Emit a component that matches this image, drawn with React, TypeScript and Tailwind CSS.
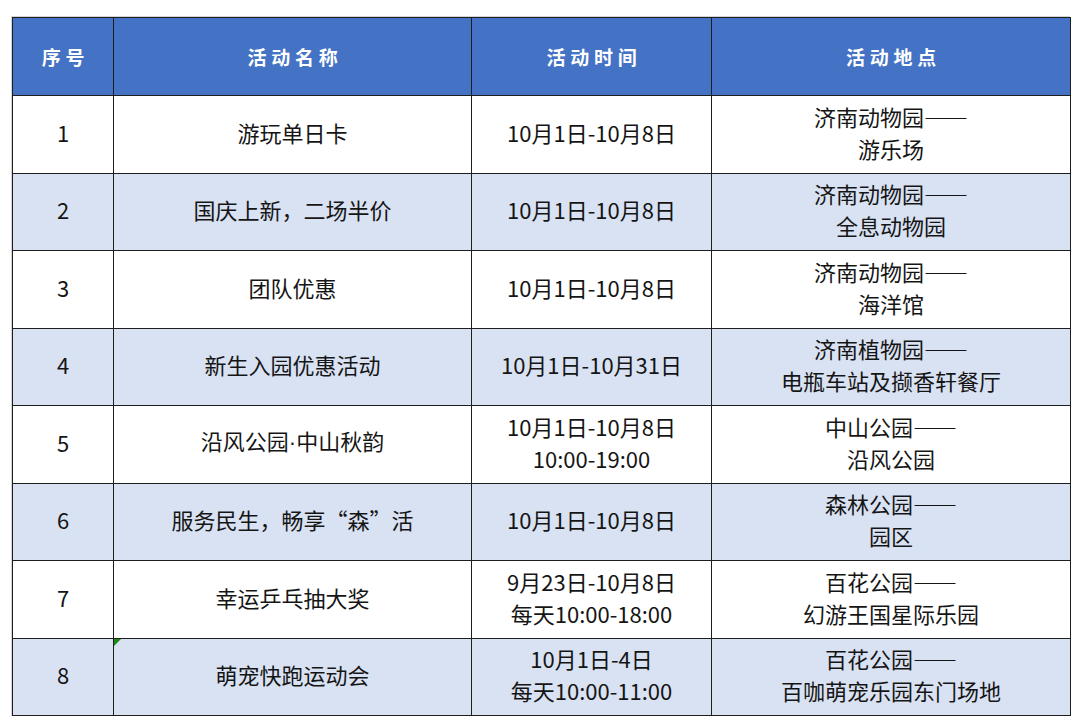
import React from "react";

type Row = { no: string; name: string; time: string[]; place: string[] };

const rows: Row[] = [
  { no: "1", name: "游玩单日卡", time: ["10月1日-10月8日"], place: ["济南动物园", "游乐场"] },
  { no: "2", name: "国庆上新，二场半价", time: ["10月1日-10月8日"], place: ["济南动物园", "全息动物园"] },
  { no: "3", name: "团队优惠", time: ["10月1日-10月8日"], place: ["济南动物园", "海洋馆"] },
  { no: "4", name: "新生入园优惠活动", time: ["10月1日-10月31日"], place: ["济南植物园", "电瓶车站及撷香轩餐厅"] },
  { no: "5", name: "沿风公园·中山秋韵", time: ["10月1日-10月8日", "10:00-19:00"], place: ["中山公园", "沿风公园"] },
  { no: "6", name: "服务民生，畅享“森”活", time: ["10月1日-10月8日"], place: ["森林公园", "园区"] },
  { no: "7", name: "幸运乒乓抽大奖", time: ["9月23日-10月8日", "每天10:00-18:00"], place: ["百花公园", "幻游王国星际乐园"] },
  { no: "8", name: "萌宠快跑运动会", time: ["10月1日-4日", "每天10:00-11:00"], place: ["百花公园", "百咖萌宠乐园东门场地"] },
];

const cell = "border-[1.5px] border-[#1e1e1e] text-center align-middle";
const body = `${cell} pb-[5px]`;

// the middle dot is narrow (Latin width) in the source
function Name({ text }: { text: string }) {
  const parts = text.split("·");
  return (
    <>
      {parts.map((p, i) => (
        <React.Fragment key={i}>
          {i > 0 && <span className="font-['Liberation_Sans']">·</span>}
          {p}
        </React.Fragment>
      ))}
    </>
  );
}

export default function App() {
  return (
    <div
      className="h-[725px] w-[1080px] bg-white pl-[11px] pt-[16px]"
      style={{ fontFamily: '"Noto Sans CJK SC", "Noto Sans", sans-serif' }}
    >
      <div className="w-[1059px] border-l border-t border-[#d6d6d6]">
        <table className="w-[1058px] table-fixed border-collapse text-[22px] leading-[32px] text-[#151515]">
          <colgroup>
            <col className="w-[101px]" />
            <col className="w-[358px]" />
            <col className="w-[240px]" />
            <col className="w-[359px]" />
          </colgroup>
          <thead>
            <tr className="h-[78px] bg-[#4472c4] text-[19px] font-semibold tracking-[0.25em] text-white">
              <th className={`${cell} pl-[5px]`}>序号</th>
              <th className={`${cell} pl-[5px]`}>活动名称</th>
              <th className={`${cell} pl-[5px]`}>活动时间</th>
              <th className={`${cell} pl-[5px]`}>活动地点</th>
            </tr>
          </thead>
          <tbody>
            {rows.map((r, i) => (
              <tr key={r.no} className={`h-[77.5px] ${i % 2 === 1 ? "bg-[#d9e2f3]" : "bg-white"}`}>
                <td className={body}>{r.no}</td>
                <td className={`${body} relative`}>
                  {r.no === "8" && (
                    <span className="absolute left-0 top-0 h-0 w-0 border-r-[7px] border-t-[7px] border-r-transparent border-t-[#1a8a1a]" />
                  )}
                  <Name text={r.name} />
                </td>
                <td className={body}>
                  {r.time.map((t) => (
                    <div key={t}>{t}</div>
                  ))}
                </td>
                <td className={body}>
                  <div>
                    {r.place[0]}
                    <span className="[font-feature-settings:'fwid']">——</span>
                  </div>
                  <div>{r.place[1]}</div>
                </td>
              </tr>
            ))}
          </tbody>
        </table>
      </div>
    </div>
  );
}
